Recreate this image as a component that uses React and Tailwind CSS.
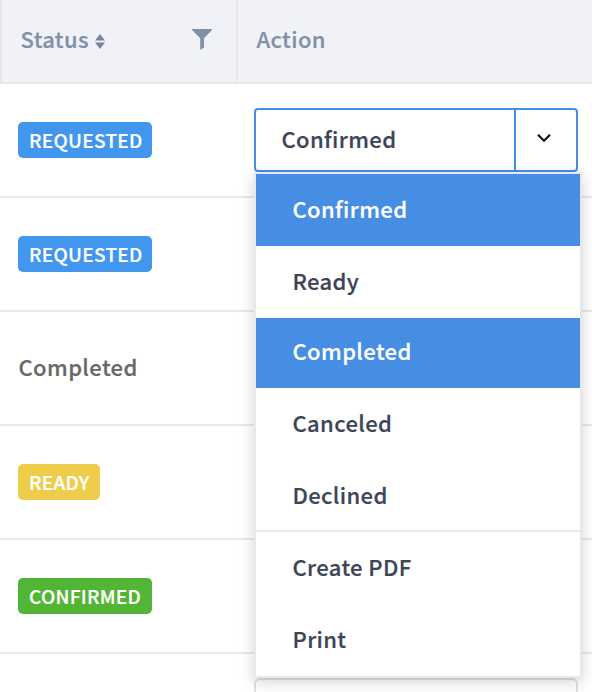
import { useState } from 'react';
import clsx from 'clsx';

const rows = [
  { id: 1, status: 'Requested', badge: 'w-[134px] bg-[#4296ed]', open: true },
  { id: 2, status: 'Requested', badge: 'w-[134px] bg-[#4296ed]' },
  { id: 3, status: 'Completed' },
  { id: 4, status: 'Ready', badge: 'w-[82px] bg-[#eecd4b]' },
  { id: 5, status: 'Confirmed', badge: 'w-[134px] bg-[#52b535]' },
  { id: 6 },
];

const options = [
  { label: 'Confirmed', size: 'h-[72px] pb-1' },
  { label: 'Ready', size: 'h-[72px] pb-1' },
  { label: 'Completed', size: 'h-[70px] pb-[6px]' },
  { label: 'Canceled', size: 'h-[72px] pb-1' },
  { label: 'Declined', size: 'h-[72px] pb-[2px]', divider: true },
  { label: 'Create PDF', size: 'h-[72px] pb-1' },
  { label: 'Print', size: 'h-[72px] pb-1' },
];

const SortIcon = () => (
  <svg className="ml-[6px] h-[15px] w-[10px]" viewBox="0 0 10 15" fill="#77869a">
    <path d="M5 0 10 6.5H0zM5 15 0 8.5h10z" />
  </svg>
);

const FilterIcon = () => (
  <svg className="mb-1 h-[21px] w-5" viewBox="0 0 20 21" fill="#8290a6">
    <path d="M0 0h20v1l-8 8.2V18.4L8.2 21V9.2L0 1z" />
  </svg>
);

const StatusBadge = ({ status, badge }) => {
  if (!badge) return <span className="pb-1 pl-[0.5px] text-[#686868]">{status}</span>;
  return (
    <span className={clsx('flex h-9 items-center rounded-[5px] pb-[2px] pl-[11px] text-[19px] uppercase tracking-[0.3px] text-white', badge)}>
      {status}
    </span>
  );
};

const ActionMenu = ({ selected, onSelect }) => (
  <ul className="absolute -left-[2px] top-[62px] z-10 w-[328px] border-2 border-[#e5e9ee] bg-white shadow-[0_4px_14px_rgba(0,0,0,0.18)]">
    {options.map(({ label, size, divider }) => (
      <li
        key={label}
        onClick={() => onSelect(label)}
        className={clsx(
          'flex cursor-pointer items-center pl-[36.5px]',
          size,
          divider && 'border-b-2 border-[#e5e9ee]',
          selected.includes(label) ? 'bg-[#458ee3] text-white' : 'text-[#3b4557]'
        )}
      >
        {label}
      </li>
    ))}
  </ul>
);

const ActionSelect = () => {
  const [value, setValue] = useState('Confirmed');

  return (
    <div className="relative flex h-16 w-[324px] rounded-[4px] border-2 border-[#458ee3] bg-white">
      <div className="flex flex-1 items-center pb-1 pl-[25.5px] text-[#3b4557]">{value}</div>
      <div className="flex w-[62px] items-center justify-center border-l-2 border-[#458ee3]">
        <svg className="mb-1 mr-1 h-[10px] w-[14px]" viewBox="0 0 14 10" fill="none" stroke="#111" strokeWidth="2.2">
          <path d="m1 1.8 6 6 6-6" />
        </svg>
      </div>
      <ActionMenu selected={[value, 'Completed']} onSelect={setValue} />
    </div>
  );
};

export default function App() {
  return (
    <div className="h-[692px] w-[592px] overflow-hidden bg-white font-['Noto_Sans_CJK_SC',sans-serif] text-[22px] font-medium leading-none tracking-[0.38px] [-webkit-text-stroke:0.22px]">
      <div className="grid h-[84px] grid-cols-[238px_1fr] border-b-2 border-[#e5e7ed] bg-[#f0f2f8] text-[#8290a6]">
        <div className="flex items-center border-x-2 border-[#e5e7ed] pl-[18.5px] pr-6">
          <span className="pb-[6px]">Status</span>
          <SortIcon />
          <button className="ml-auto">
            <FilterIcon />
          </button>
        </div>
        <div className="flex items-center pb-[6px] pl-[18.5px]">Action</div>
      </div>

      {rows.map((row) => (
        <div key={row.id} className="grid h-[114px] grid-cols-[254px_1fr] border-b-2 border-[#e5e9ee]">
          <div className="flex items-center pl-[18px]">
            {row.status && <StatusBadge status={row.status} badge={row.badge} />}
          </div>
          <div className="flex items-center">
            {row.open && <ActionSelect />}
            {!row.status && <div className="h-16 w-[324px] rounded-[6px] border-2 border-[#dfe1e4]" />}
          </div>
        </div>
      ))}
    </div>
  );
}
